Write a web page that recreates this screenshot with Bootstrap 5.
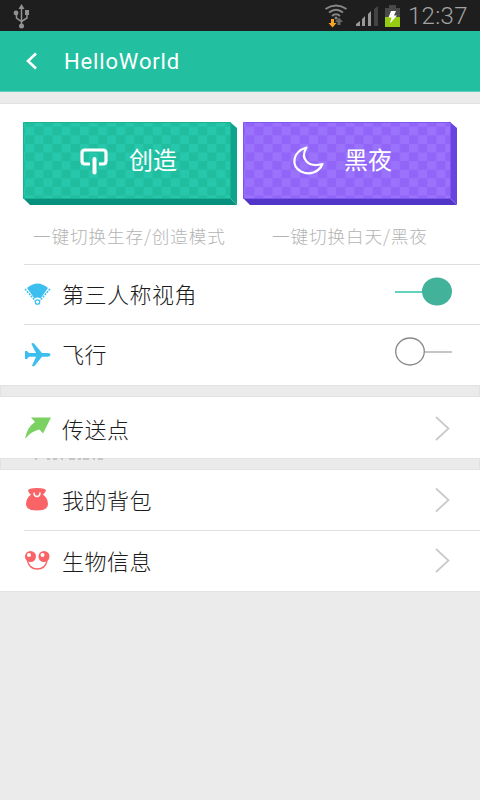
<!DOCTYPE html>
<html lang="zh-CN">
<head>
<meta charset="utf-8">
<meta name="viewport" content="width=device-width, initial-scale=1">
<title>HelloWorld</title>
<link rel="stylesheet" href="https://cdn.jsdelivr.net/npm/bootstrap@5.3.0/dist/css/bootstrap.min.css">
<style>
body{background:#ebebeb;font-family:Roboto,"Noto Sans CJK SC",sans-serif;width:480px;height:800px;overflow:hidden}
svg{display:block;flex:none;overflow:visible}
.status{height:31px;background:#1e1e1e;padding:0 13px 0 13px}
.clock{font-size:24px;line-height:31px;color:#a3a3a3;font-weight:300;letter-spacing:.3px;width:59px;white-space:nowrap;margin-left:5px;padding-top:1px}
.topbar{height:61px;background:#22bfa0;color:#fff;padding:0 26px;border-bottom:1px solid #5fcfb9}
.topbar h1{font-size:22px;line-height:60px;letter-spacing:.85px;margin:2px 0 0 26px;font-weight:400}
.panel{background:#fff;font-family:"Noto Sans CJK SC",sans-serif;font-weight:300}
.panel-first{margin-top:11px;height:282px;padding-top:18px;border-top:1px solid #e2e2e2}
.gap-bar{height:12px;border:1px solid #e2e2e2}
.tiles{padding-left:23px;gap:6px}
.tile{width:214px;height:83px;color:#fff}
.tile-face{left:0;top:0;width:207px;height:76px}
.tile-label{font-size:24px;line-height:74px;font-weight:400}
.hints{height:59px;font-size:17.600px;line-height:62px;color:#b4b4b4;letter-spacing:.9px;white-space:nowrap}
.item{height:60px;margin-left:24px;padding-right:28px;font-size:22px;color:#1c1c1c;letter-spacing:.5px}
.item.lined{border-top:1px solid #dfdfdf}
.item .label{margin-left:11px;line-height:56px;padding-bottom:3px}
</style>
</head>
<body>
<div class="status d-flex align-items-center">
  <svg width="18" height="26" viewBox="0 0 18 26" fill="none" stroke="#929292" stroke-width="1.5"><path d="M8.500 22V4M3.500 11v4l5 3.500 5.500-3.500v-4"/><g fill="#929292" stroke="none"><path d="M8.500 1l3 5h-6z"/><circle cx="3" cy="10" r="2.400"/><path d="M12 7h4v5h-4z"/><circle cx="8.500" cy="23" r="2.500"/></g></svg>
  <svg class="ms-auto" width="80" height="31" viewBox="0 0 80 31" fill="none"><g stroke="#888" stroke-width="2"><path d="M2.500 9q10.500-7 21 0M6 12.500q7-5.500 14 0M9 16q4-3.500 8 0"/></g><circle cx="13" cy="18" r="1.500" fill="#888"/><path d="M8 19h3v4h2.500L9.500 27.500 5.500 23H8z" fill="#f7a525"/><path d="M14.500 25v-3H12l4-4.500 4 4.500h-2.500v3z" fill="#666"/><path d="M33 26v-2l4-3v5zM39 26v-7l3-3v10zM45 26V14l3-3v15z" fill="#999"/><path d="M51 26V9l4-3v20z" fill="#444"/><path d="M62 8h4V5h7v3h4v19H62z" fill="#494949"/><path d="M62 17h15v10H62z" fill="#95cc12"/><path d="M68 11h5l-2 4.500h3L67 23.500l1.500-6h-3z" fill="#fff"/></svg>
  <div class="clock">12:37</div>
</div>
<header class="topbar d-flex align-items-center">
  <svg width="12" height="18" viewBox="0 0 12 18"><path d="M10 1.500L2 9l8 7.500" fill="none" stroke="#fff" stroke-width="2.600"/></svg>
  <h1>HelloWorld</h1>
</header>
<main>
<section class="panel panel-first">
  <div class="tiles d-flex">
    <div class="tile position-relative">
      <svg width="214" height="83" viewBox="0 0 214 83">
        <defs><pattern id="pg" width="18.200" height="17.200" patternUnits="userSpaceOnUse" x="2.200" y="4.700"><path fill="#26c7ab" d="M0 0h18.200v17.200H0z"/><path fill="#20bd9f" d="M9.100 0h9.100v8.600H9.100zM0 8.600h9.100v8.600H0z"/></pattern></defs>
        <path d="M0 76h207l7 7H7z" fill="#08907f"/><path d="M207 0l7 6v77l-7-7z" fill="#0da58c"/><path d="M.5.5h207v76H.5z" fill="url(#pg)" stroke="#18b392"/>
        <path d="M67 42h-5q-3 0-3-3v-8q0-3 3-3h18q3 0 3 3v8q0 3-3 3h-4" fill="none" stroke="#fff" stroke-width="3.200"/><path d="M71.500 37v13.500" stroke="#fff" stroke-width="4" stroke-linecap="round"/>
      </svg>
      <div class="tile-face position-absolute"><div class="tile-label" style="padding-left:106px">创造</div></div>
    </div>
    <div class="tile position-relative">
      <svg width="214" height="83" viewBox="0 0 214 83">
        <defs><pattern id="pp" width="18.200" height="17.200" patternUnits="userSpaceOnUse" x="2.200" y="4.700"><path fill="#9b72fb" d="M0 0h18.200v17.200H0z"/><path fill="#9065f7" d="M9.100 0h9.100v8.600H9.100zM0 8.600h9.100v8.600H0z"/></pattern></defs>
        <path d="M0 76h207l7 7H7z" fill="#5135c9"/><path d="M207 0l7 6v77l-7-7z" fill="#6645e0"/><path d="M.5.5h207v76H.5z" fill="url(#pp)" stroke="#8156f0"/>
        <path d="M63.500 25.500C49 30 48 44 58 49.500c8 4 18 1 21.500-7.500-14 4-23-5-16-16.500z" fill="none" stroke="#fff" stroke-width="2.200" stroke-linejoin="round"/>
      </svg>
      <div class="tile-face position-absolute"><div class="tile-label" style="padding-left:101px">黑夜</div></div>
    </div>
  </div>
  <div class="hints d-flex"><div style="width:239px;padding-left:33px">一键切换生存/创造模式</div><div style="padding-left:33px">一键切换白天/黑夜</div></div>
  <div class="item lined d-flex align-items-center">
    <svg width="27" height="26" viewBox="0 0 27 26"><path d="M3 6Q13.500-3 24 6L16.500 16.500q-3-2-6 0z" fill="#3cbfee"/><path d="M1 7l10 11.500M26 7L16 18.500" stroke="#3cbfee" stroke-width="1.500" stroke-dasharray="2 1"/><circle cx="13.500" cy="20" r="2.200" fill="#fff" stroke="#3cbfee" stroke-width="1.300"/></svg>
    <span class="label">第三人称视角</span>
    <svg class="ms-auto" width="57" height="30" viewBox="0 0 57 30"><path d="M0 12h30" stroke="#62d2bd" stroke-width="2"/><ellipse cx="42" cy="11.500" rx="15" ry="14" fill="#43b29b"/></svg>
  </div>
  <div class="item lined d-flex align-items-center">
    <svg width="27" height="26" viewBox="0 0 27 26"><path d="M1 9h2l2 2h7L7.500 2q0-1.500 2.500-.5l8 9.500H24q2.500.3 2.500 1.800T24 14.800h-6l-7.500 9.200q-2 .8-2.500-.3L12 14.800H5L3 17H1z" fill="#3cbfee"/></svg>
    <span class="label">飞行</span>
    <svg class="ms-auto" width="57" height="30" viewBox="0 0 57 30"><path d="M30 12h27" stroke="#c5c5c5" stroke-width="2"/><ellipse cx="15" cy="11.500" rx="14.300" ry="13.500" fill="#fff" stroke="#888" stroke-width="1.300"/></svg>
  </div>
</section>
<div class="gap-bar"></div>
<section class="panel">
  <div class="item d-flex align-items-center pt-1" style="height:61px">
    <svg width="27" height="26" viewBox="0 0 27 26"><path d="M7 .5h20l-8 16-3.500-4Q7 14 1 22 3 10 11 5z" fill="#7bd162"/></svg>
    <span class="label">传送点</span>
    <svg class="ms-auto" width="18" height="26" viewBox="0 0 18 26"><path d="M2 0L14.500 11.500 2 23" fill="none" stroke="#c9c9c9" stroke-width="1.700"/></svg>
  </div>
</section>
<div class="gap-bar">
  <svg width="110" height="2" viewBox="0 0 110 2"><path d="M34 0h2M46 0h3M52 0h4M60 0h2M68 0h6M77 0h3M82 0h6M92 0h2M97 0h5" stroke="#bbb" stroke-width="1.500"/></svg>
</div>
<section class="panel">
  <div class="item d-flex align-items-center">
    <svg width="27" height="26" viewBox="0 0 27 26"><path d="M4 3.500Q4 1 13 1t9 2.500Q21 6 19 7.500q5 4 5 9.500Q24 23.500 13 23.500T2 17q0-5.500 5-9.500Q4.500 6 4 3.500z" fill="#fb6467"/><path d="M10 5.500q0 4 3 4t3-4" stroke="#fff" stroke-width="1.500" fill="none"/></svg>
    <span class="label">我的背包</span>
    <svg class="ms-auto" width="18" height="26" viewBox="0 0 18 26"><path d="M2 1.500L14.500 13 2 24.500" fill="none" stroke="#c9c9c9" stroke-width="1.700"/></svg>
  </div>
  <div class="item lined d-flex align-items-center" style="height:61px">
    <svg width="27" height="26" viewBox="0 0 27 26"><circle cx="6.500" cy="8.500" r="5.500" fill="#fb6467"/><circle cx="20" cy="8.500" r="5.500" fill="#fb6467"/><circle cx="5" cy="7" r="2" fill="#fff"/><circle cx="18.500" cy="7" r="2" fill="#fff"/><path d="M3.500 13q2 8 9.800 8t9.700-8" fill="none" stroke="#fb6467" stroke-width="1.300"/></svg>
    <span class="label">生物信息</span>
    <svg class="ms-auto" width="18" height="26" viewBox="0 0 18 26"><path d="M2 1L14.500 12.500 2 24" fill="none" stroke="#c9c9c9" stroke-width="1.700"/></svg>
  </div>
  <div style="height:1px;background:#e2e2e2"></div>
</section>
</main>
<script src="https://cdn.jsdelivr.net/npm/bootstrap@5.3.0/dist/js/bootstrap.bundle.min.js"></script>
</body>
</html>
